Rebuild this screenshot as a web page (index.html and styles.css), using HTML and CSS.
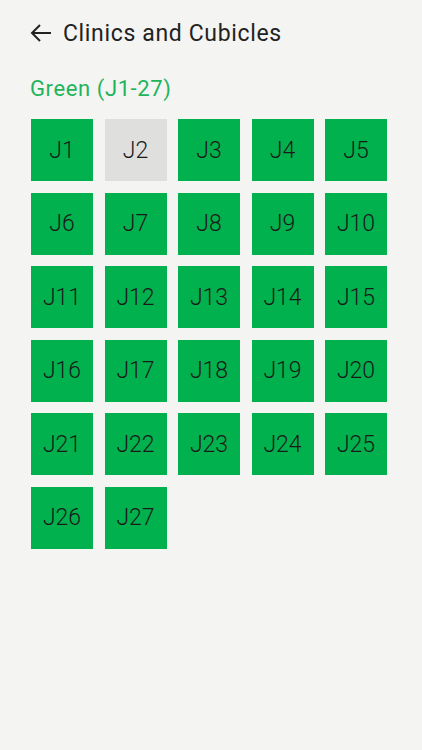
FILE: index.html
```html
<!DOCTYPE html>
<html lang="en">
<head>
    <meta charset="UTF-8">
    <meta name="viewport" content="width=device-width, initial-scale=1.0">
    <title>Clinics and Cubicles</title>
    <link rel="stylesheet" href="styles.css">
</head>
<body>
    <header class="topbar">
        <svg class="back" width="24" height="20" viewBox="0 0 24 20">
            <path d="M22 10H3M11 2L3 10l8 8" fill="none" stroke="#222" stroke-width="2"/>
        </svg>
        <h1>Clinics and Cubicles</h1>
    </header>
    <div class="content">
        <h2 class="zone">Green (J1-27)</h2>
        <div class="grid">
            <div class="cell">J1</div>
            <div class="cell off">J2</div>
            <div class="cell">J3</div>
            <div class="cell">J4</div>
            <div class="cell">J5</div>
            <div class="cell">J6</div>
            <div class="cell">J7</div>
            <div class="cell">J8</div>
            <div class="cell">J9</div>
            <div class="cell">J10</div>
            <div class="cell">J11</div>
            <div class="cell">J12</div>
            <div class="cell">J13</div>
            <div class="cell">J14</div>
            <div class="cell">J15</div>
            <div class="cell">J16</div>
            <div class="cell">J17</div>
            <div class="cell">J18</div>
            <div class="cell">J19</div>
            <div class="cell">J20</div>
            <div class="cell">J21</div>
            <div class="cell">J22</div>
            <div class="cell">J23</div>
            <div class="cell">J24</div>
            <div class="cell">J25</div>
            <div class="cell">J26</div>
            <div class="cell">J27</div>
        </div>
    </div>
</body>
</html>
```

FILE: styles.css
```css
body {
    margin: 0;
    background-color: #f4f4f2;
    font-family: "Roboto", "DejaVu Sans", sans-serif;
    color: #222;
    min-height: 100vh;
}
.topbar {
    display: flex;
    align-items: center;
    gap: 10px;
    padding: 20px 30px 0 29px;
    height: 26px;
}
.back {
    display: block;
}
.topbar h1 {
    margin: 0;
    font-size: 23px;
    font-weight: 400;
    letter-spacing: 0.65px;
    color: #222;
}
.content {
    padding: 0 31px;
}
.zone {
    margin: 30px 0 17px -1px;
    font-size: 22px;
    font-weight: 400;
    color: #1fb45c;
    letter-spacing: 0.6px;
    line-height: 26px;
}
.grid {
    display: grid;
    grid-template-columns: repeat(5, 62px);
    grid-auto-rows: 62px;
    gap: 11.5px;
}
.cell {
    display: flex;
    align-items: center;
    justify-content: center;
    background-color: #00b14d;
    font-size: 23px;
    font-weight: 300;
    color: #1a1a1a;
}
.cell.off {
    background-color: #dfdfde;
}
```
